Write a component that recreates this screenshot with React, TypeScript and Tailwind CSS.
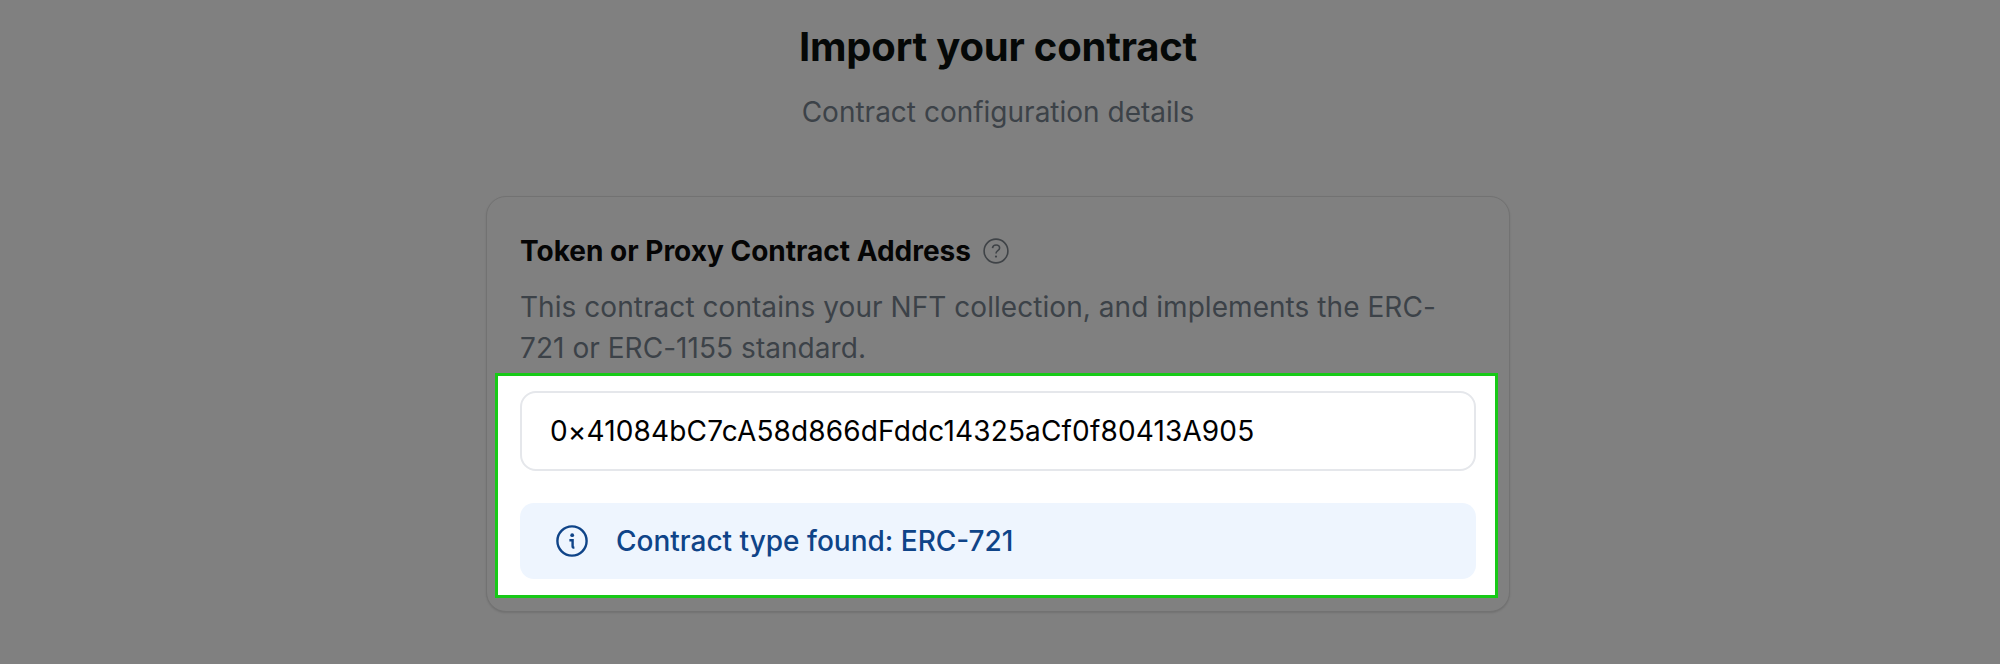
function InfoIcon() {
  return (
    <svg viewBox="0 0 32 32" className="size-8 shrink-0" fill="none" stroke="#0f4488" strokeWidth="2.4">
      <circle cx="16" cy="16" r="14.6" />
      <circle cx="16.2" cy="10.2" r="1.9" fill="#0f4488" stroke="none" />
      <path d="M13.4 15.2h3.2v6c0 1 .5 1.4 1.8 1.4" strokeWidth="2.4" />
    </svg>
  );
}

function HelpIcon() {
  return (
    <svg viewBox="0 0 26 26" className="size-[26px] shrink-0" fill="none" stroke="#3f4347" strokeWidth="1.6">
      <circle cx="13" cy="13" r="11.9" />
      <path d="M9.5 10.2c.2-2 1.7-3.2 3.6-3.2 2 0 3.5 1.3 3.5 3 0 2.6-3.6 2.8-3.6 5.4" />
      <circle cx="13" cy="18.6" r="1.1" fill="#3f4347" stroke="none" />
    </svg>
  );
}

export default function App() {
  return (
    <div className="h-[664px] overflow-hidden bg-[#808080] pr-[4px] flex flex-col items-center font-['Inter',sans-serif]">
      <h1 className="mt-[25px] text-[40px] leading-[44px] font-bold tracking-[-0.2px] text-[#050807]">
        Import your contract
      </h1>
      <p className="mt-[25px] text-[28px] leading-[36px] text-[#3c4248]">
        Contract configuration details
      </p>
      <div className="mt-[66px] w-[1024px] rounded-[20px] border border-[#727272] bg-[#808080] px-[33px] pt-[36px] pb-[13px] shadow-[0_1px_2px_rgba(0,0,0,0.12)]">
        <div className="flex items-center gap-[12px]">
          <h2 className="text-[28px] leading-[36px] font-bold text-[#050505]">
            Token or Proxy Contract Address
          </h2>
          <HelpIcon />
        </div>
        <p className="mt-[18px] text-[28px] leading-[41px] tracking-[0.05px] text-[#3c4248]">
          This contract contains your NFT collection, and implements the ERC-721 or ERC-1155 standard.
        </p>
        <div className="-ml-[25px] -mr-[22px] mt-[4px] border-[3px] border-[#17c917] bg-white pl-[22px] pr-[19px] pt-[15px] pb-[16px]">
          <input
            readOnly
            value="0×41084bC7cA58d866dFddc14325aCf0f80413A905"
            className="block h-[80px] w-full rounded-[16px] border-2 border-[#e5e7eb] bg-white px-[28px] text-[28px] tracking-[0.15px] text-black"
          />
          <div className="mt-[32px] flex h-[76px] items-center gap-[28px] rounded-[14px] bg-[#eef5fe] px-[36px]">
            <InfoIcon />
            <span className="text-[28px] leading-[36px] font-medium text-[#0f4488]">
              Contract type found: ERC-721
            </span>
          </div>
        </div>
      </div>
    </div>
  );
}
